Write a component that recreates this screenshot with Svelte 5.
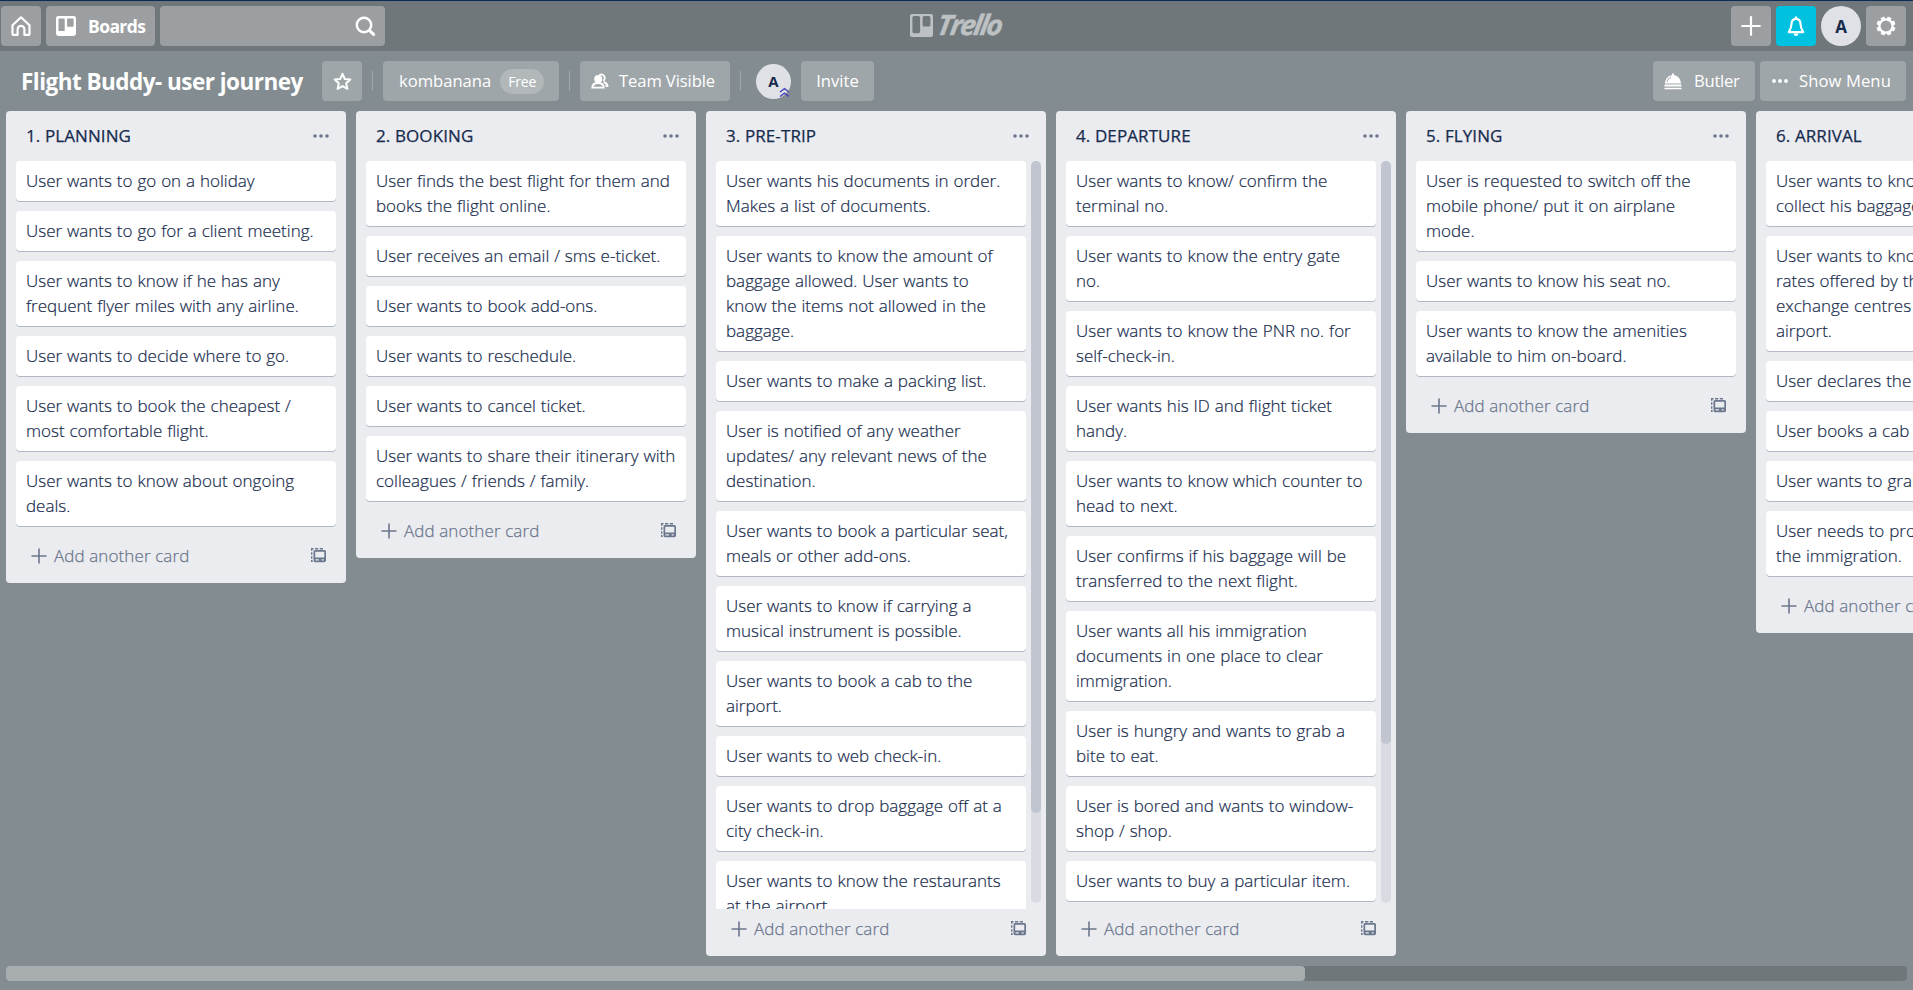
<script>
  const lists = [
    { title: '1. PLANNING', cards: [
      'User wants to go on a holiday',
      'User wants to go for a client meeting.',
      'User wants to know if he has any\nfrequent flyer miles with any airline.',
      'User wants to decide where to go.',
      'User wants to book the cheapest /\nmost comfortable flight.',
      'User wants to know about ongoing\ndeals.'
    ] },
    { title: '2. BOOKING', cards: [
      'User finds the best flight for them and\nbooks the flight online.',
      'User receives an email / sms e-ticket.',
      'User wants to book add-ons.',
      'User wants to reschedule.',
      'User wants to cancel ticket.',
      'User wants to share their itinerary with\ncolleagues / friends / family.'
    ] },
    { title: '3. PRE-TRIP', thumb: 652, cards: [
      'User wants his documents in order.\nMakes a list of documents.',
      'User wants to know the amount of\nbaggage allowed. User wants to\nknow the items not allowed in the\nbaggage.',
      'User wants to make a packing list.',
      'User is notified of any weather\nupdates/ any relevant news of the\ndestination.',
      'User wants to book a particular seat,\nmeals or other add-ons.',
      'User wants to know if carrying a\nmusical instrument is possible.',
      'User wants to book a cab to the\nairport.',
      'User wants to web check-in.',
      'User wants to drop baggage off at a\ncity check-in.',
      'User wants to know the restaurants\nat the airport.'
    ] },
    { title: '4. DEPARTURE', thumb: 583, cards: [
      'User wants to know/ confirm the\nterminal no.',
      'User wants to know the entry gate\nno.',
      'User wants to know the PNR no. for\nself-check-in.',
      'User wants his ID and flight ticket\nhandy.',
      'User wants to know which counter to\nhead to next.',
      'User confirms if his baggage will be\ntransferred to the next flight.',
      'User wants all his immigration\ndocuments in one place to clear\nimmigration.',
      'User is hungry and wants to grab a\nbite to eat.',
      'User is bored and wants to window-\nshop / shop.',
      'User wants to buy a particular item.'
    ] },
    { title: '5. FLYING', cards: [
      'User is requested to switch off the\nmobile phone/ put it on airplane\nmode.',
      'User wants to know his seat no.',
      'User wants to know the amenities\navailable to him on-board.'
    ] },
    { title: '6. ARRIVAL', cards: [
      'User wants to know where to\ncollect his baggage.',
      'User wants to know the\nrates offered by the\nexchange centres at the\nairport.',
      'User declares the goods.',
      'User books a cab online.',
      'User wants to grab a bite.',
      'User needs to proceed to\nthe immigration.'
    ] }
  ];
</script>

<div class="page">
  <header class="top">
    <div class="group">
      <button class="btn sq" aria-label="Home">
        <svg width="20" height="20" viewBox="0 0 20 20" fill="none" stroke="#fff" stroke-width="2.2" stroke-linejoin="round" stroke-linecap="round"><path d="M10 1.3 1.5 9.2V18a.9.9 0 0 0 .9.9H6.6V13.2a3.4 3.4 0 0 1 6.8 0V18.9h4.2a.9.9 0 0 0 .9-.9V9.2Z" /></svg>
      </button>
      <button class="btn boards">
        <svg width="20" height="20" viewBox="0 0 20 20"><path fill="#fff" fill-rule="evenodd" d="M2.4 0h15.2A2.4 2.4 0 0 1 20 2.4v15.2a2.4 2.4 0 0 1-2.4 2.4H2.4A2.4 2.4 0 0 1 0 17.6V2.4A2.4 2.4 0 0 1 2.4 0ZM3.1 2.5a.6.6 0 0 0-.6.6v11.3c0 .3.3.6.6.6h5c.3 0 .6-.3.6-.6V3.1a.6.6 0 0 0-.6-.6Zm8.6 0a.6.6 0 0 0-.6.6v7c0 .3.3.6.6.6H17c.3 0 .6-.3.6-.6v-7a.6.6 0 0 0-.6-.6Z" /></svg>
        <b>Boards</b>
      </button>
      <div class="btn search">
        <svg width="21" height="21" viewBox="0 0 21 21" fill="none" stroke="#fff" stroke-width="2.4" stroke-linecap="round"><circle cx="9" cy="9" r="7.2" /><path d="m14.6 14.6 4 3.8" stroke-width="3" /></svg>
      </div>
    </div>
    <div class="logo">
      <svg width="23" height="23" viewBox="0 0 23 23"><path fill="#bdc1c4" fill-rule="evenodd" d="M2 0h19a2 2 0 0 1 2 2v19a2 2 0 0 1-2 2H2a2 2 0 0 1-2-2V2a2 2 0 0 1 2-2Zm2 2a1.6 1.6 0 0 0-1.6 1.6v14A1.6 1.6 0 0 0 4 19.200h4.500a1.600 1.600 0 0 0 1.600-1.600v-14A1.600 1.600 0 0 0 8.500 2Zm10.200 0a1.600 1.600 0 0 0-1.600 1.600V11a1.600 1.600 0 0 0 1.600 1.600h4.600a1.600 1.600 0 0 0 1.600-1.600V3.600A1.600 1.600 0 0 0 18.800 2Z" /></svg>
      <span>Trello</span>
    </div>
    <div class="group right">
      <button class="btn sq" aria-label="Create"><svg width="20" height="20" viewBox="0 0 20 20" stroke="#fff" stroke-width="2.2" stroke-linecap="round"><path d="M10 1.200v17.600M1.200 10h17.600" /></svg></button>
      <button class="btn sq bell" aria-label="Notifications"><svg width="18" height="21" viewBox="0 0 18 21"><path d="M9 2.800C6 2.800 4.600 5.200 4.500 8 4.400 11.400 3.900 12.800 1.800 16.200h14.400C14.100 12.800 13.600 11.400 13.500 8 13.400 5.200 12 2.800 9 2.800Z" fill="none" stroke="#fff" stroke-width="2.200" stroke-linejoin="round" /><path d="M7.800.6h2.400v2H7.800zM6.500 17.500h5a2.500 2.500 0 0 1-5 0Z" fill="#fff" /></svg></button>
      <div class="avatar big">A</div>
      <button class="btn sq" aria-label="Settings"><svg width="20" height="20" viewBox="0 0 20 20"><circle cx="10" cy="10" r="6.600" fill="none" stroke="#fff" stroke-width="2.300" /><g stroke="#fff" stroke-width="4">{#each [22.5, 67.5, 112.5, 157.5, 202.5, 247.5, 292.5, 337.5] as a}<path d="M10 .5v2.800" transform="rotate({a} 10 10)" />{/each}</g></svg></button>
    </div>
  </header>

  <div class="bar">
    <h1>Flight Buddy- user journey</h1>
    <button class="btn sq star" aria-label="Star"><svg width="19" height="19" viewBox="0 0 18 18" fill="none" stroke="#fff" stroke-width="1.900" stroke-linejoin="round"><path d="m9 1.700 2.200 4.900 5.200.6-3.900 3.500 1.100 5.300L9 13.300l-4.600 2.700 1.100-5.300L1.600 7.200l5.200-.6Z" /></svg></button>
    <i class="sep"></i>
    <button class="btn team"><span>kombanana</span><em>Free</em></button>
    <i class="sep"></i>
    <button class="btn visible"><svg width="18" height="16" viewBox="0 0 18 16"><g fill="none" stroke="#fff" stroke-width="1.900"><path d="M8.300 2.200a3.300 3.300 0 1 1 4 5.600M12.500 9c2.400.6 3.600 1.900 3.900 4h-2" /><path d="M1.300 14.600c.2-3.200 2-4.600 5.700-4.600s5.500 1.400 5.700 4.600Z" /></g><circle cx="7.200" cy="6" r="4" fill="#fff" /></svg><span>Team Visible</span></button>
    <i class="sep"></i>
    <div class="avatar small">A<svg width="11" height="11" viewBox="0 0 11 11" fill="none" stroke="#4b45b5" stroke-width="1.500"><path d="M1 5 5.500 1.700 10 5M1 9.500l4.500-3.300L10 9.500" /></svg></div>
    <button class="btn invite"><span>Invite</span></button>
    <button class="btn butler"><svg width="18" height="17" viewBox="0 0 18 17" fill="#fff"><path d="M8 1.200a1 1 0 0 1 2 0v1c4 .5 6.800 3.700 7 8.300H1C1.200 5.900 4 2.700 8 2.200ZM.5 11.600h17v2H.5zM.5 14.700h17v1.500H.5z" /><path d="M3.300 9c.3-2.400 1.500-4 3.600-4.800" fill="none" stroke="#9ca3a5" /></svg><span>Butler</span></button>
    <button class="btn menu"><svg class="dots" width="16" height="4" viewBox="0 0 16 4" fill="#fff"><circle cx="2" cy="2" r="1.900" /><circle cx="8" cy="2" r="1.900" /><circle cx="14" cy="2" r="1.900" /></svg><span>Show Menu</span></button>
  </div>

  <main>
    {#each lists as list}
      <section class:scrolls={list.thumb}>
        <div class="head"><h2>{list.title}</h2><svg width="16" height="4" viewBox="0 0 16 4" fill="#6b778c"><circle cx="2" cy="2" r="1.800" /><circle cx="8" cy="2" r="1.800" /><circle cx="14" cy="2" r="1.800" /></svg></div>
        <div class="body">
          <div class="cards">
            {#each list.cards as card}<article>{card}</article>{/each}
          </div>
          {#if list.thumb}<div class="track"><div class="thumb" style="height:{list.thumb}px"></div></div>{/if}
        </div>
        <div class="foot">
          <svg width="16" height="16" viewBox="0 0 16 16" stroke="#6b778c" stroke-width="1.600"><path d="M8 .5v15M.5 8h15" /></svg>
          <span>Add another card</span>
          <svg class="tpl" width="16" height="15" viewBox="0 0 16 15"><path d="M1.700 2.800V.8H3.500M5 .8h3.300M9.800.8h3.200M1.700 4.300v2.500M1.700 8.200v2.500M1.700 12v1.300h1" fill="none" stroke="#6b778c" stroke-width="1.400" /><path fill="#6b778c" fill-rule="evenodd" d="M5 2h9.500A1.500 1.500 0 0 1 16 3.500v9a1.700 1.700 0 0 1-1.700 1.700H5.200a1.700 1.700 0 0 1-1.700-1.700v-9A1.500 1.500 0 0 1 5 2Zm.2 1.700v5.800h9.100V3.700ZM5.500 11.200v1.400h3.300v-1.400Zm6.200 0v1.400h2v-1.400Z" /></svg>
        </div>
      </section>
    {/each}
  </main>
  <div class="hscroll"><div></div></div>
</div>

<style>
  :global(body) { margin: 0; overflow: hidden; }
  * { box-sizing: border-box; }
  .page { width: 1913px; height: 990px; background: #838c91; font-family: "Open Sans", "Noto Sans", sans-serif; font-size: 16.6px; color: #172b4d; overflow: hidden; display: flex; flex-direction: column; }
  button { border: 0; font: inherit; padding: 0; margin: 0; }
  svg { flex: none; display: block; }
  .top { height: 51px; flex: none; border-top: 1px solid #0a2a5c; background: #6f777a; padding: 5px 7px 0 1px; display: grid; grid-template-columns: 1fr 93px 1fr; align-items: start; }
  .group { display: flex; gap: 5px; }
  .right { justify-content: flex-end; }
  .btn { height: 40px; border-radius: 4px; background: #9b9fa1; color: #fff; display: flex; align-items: center; flex: none; white-space: nowrap; }
  .sq { width: 40px; justify-content: center; }
  .boards { width: 109px; padding-left: 10px; gap: 12px; }
  .boards b { font-size: 17.5px; letter-spacing: -0.6px; padding-bottom: 1px; }
  .search { width: 225px; justify-content: flex-end; padding-right: 9px; }
  .bell { background: #00c2e0; }
  .logo { display: flex; gap: 5px; margin: 8px 0 0 3px; color: #bdc1c4; }
  .logo span { font: italic 700 28px/23px "Open Sans", sans-serif; letter-spacing: -2px; transform: translateY(-1px) skewX(-9deg); -webkit-text-stroke: .4px #bdc1c4; }
  .avatar { border-radius: 50%; background: #dfe1e6; font-weight: 700; display: flex; align-items: center; justify-content: center; flex: none; }
  .big { width: 40px; height: 40px; font-size: 17px; }
  .small { width: 35px; height: 35px; font-size: 15px; position: relative; }
  .small svg { position: absolute; right: 1px; bottom: 1px; }
  .bar { height: 60px; flex: none; padding: 10px 7px 10px 21px; display: flex; align-items: center; }
  .bar .btn { background: #9fa6a9; }
  .bar .btn span { padding-bottom: 2px; }
  h1 { margin: 0; padding-top: 1px; color: #fff; font-size: 22.5px; line-height: 30px; font-weight: 700; letter-spacing: -0.53px; width: 301px; white-space: nowrap; }
  .sep { width: 1px; height: 20px; background: #a1a8ab; margin: 0 10px; flex: none; }
  .team { width: 176px; padding-left: 16px; gap: 9px; }
  .team em { font-style: normal; font-size: 14px; letter-spacing: -.2px; width: 44px; height: 25px; border-radius: 13px; background: #b2b8ba; display: grid; place-items: center; }
  .visible { width: 150px; padding-left: 11px; gap: 10px; letter-spacing: -.1px; }
  .small { margin: 0 10px 0 5px; }
  .invite { width: 73px; justify-content: center; margin-right: auto; }
  .butler { width: 102px; padding-left: 11px; gap: 12px; margin-right: 5px; letter-spacing: -.25px; }
  .menu { width: 146px; padding-left: 12px; gap: 11px; letter-spacing: .1px; }
  main { height: 845px; flex: none; padding-left: 6px; display: flex; align-items: flex-start; gap: 10px; }
  section { width: 340px; max-height: 845px; flex: none; border-radius: 4px; background: #ebecf0; display: flex; flex-direction: column; }
  .head { height: 50px; flex: none; display: flex; align-items: center; justify-content: space-between; padding: 0 17px 0 20px; }
  h2 { margin: 0; padding-bottom: 2px; font-size: 17px; font-weight: 400; line-height: 25px; letter-spacing: .1px; -webkit-text-stroke: .25px #172b4d; }
  .body { display: flex; min-height: 0; padding: 0 10px; overflow: hidden; }
  .cards { flex: 1; }
  article { background: #fff; border-radius: 4px; box-shadow: 0 1px 0 rgba(9,30,66,.25); padding: 7px 0 8px 10px; margin-bottom: 10px; font-size: 17px; line-height: 25px; white-space: pre; font-weight: 300; letter-spacing: 0; word-spacing: .5px; -webkit-text-stroke: .2px #172b4d; overflow: hidden; }
  .scrolls .body { padding-right: 5px; gap: 5px; }
  .scrolls .cards { flex: 0 0 310px; }
  .track { width: 10px; height: 742px; border-radius: 5px; background: #dadbe2; flex: none; }
  .thumb { border-radius: 5px; background: #c1c5d0; }
  .foot { height: 47px; flex: none; display: flex; padding: 12px 20px 0 25px; color: #6b778c; font-size: 17px; line-height: 16px; white-space: nowrap; gap: 7px; font-weight: 300; letter-spacing: .1px; -webkit-text-stroke: .25px #6b778c; }
  .tpl { margin-left: auto; }
  .hscroll { width: 1901px; height: 15px; flex: none; border-radius: 4px; background: #6f777a; margin: 10px 0 0 6px; }
  .hscroll div { width: 1299px; height: 15px; border-radius: 4px; background: #a8adaf; }
</style>
